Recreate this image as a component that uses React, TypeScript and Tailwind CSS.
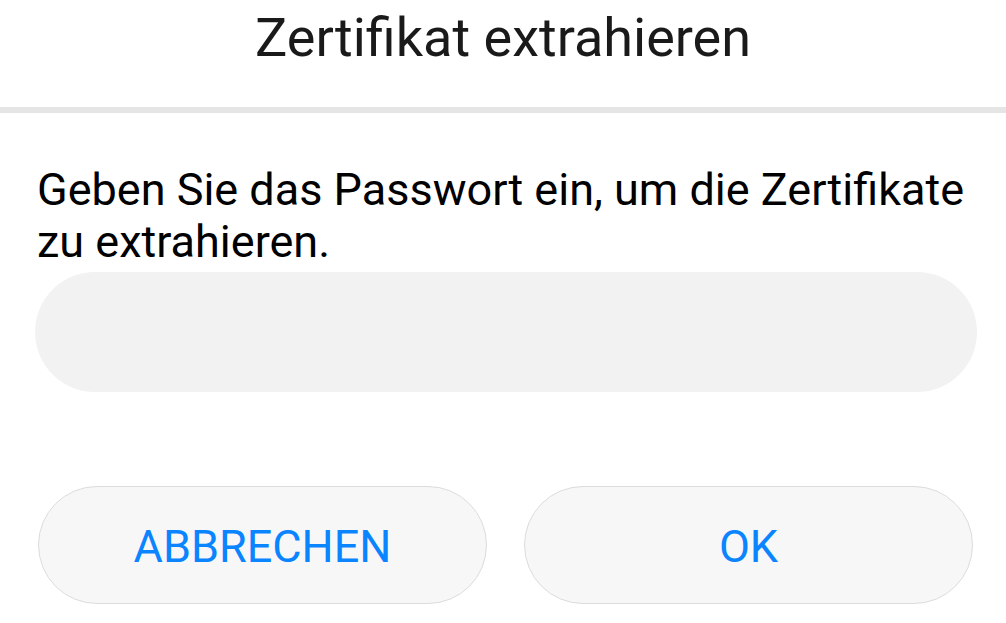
export default function App() {
  return (
    <div
      className="flex h-[623px] w-[1006px] flex-col overflow-hidden bg-white"
      style={{ fontFamily: "Roboto, 'Noto Sans', sans-serif" }}
    >
      <div className="flex h-[107px] items-start justify-center pt-[6px]">
        <h1 className="text-[54px] leading-[64px] text-[#1a1a1a]">Zertifikat extrahieren</h1>
      </div>
      <div className="h-[6px] bg-[#e5e5e5]" />

      <div className="pl-[35px] pr-[29px] pt-[51px]">
        <p className="pl-[2px] text-[45px] leading-[52px] text-black">
          Geben Sie das Passwort ein, um die Zertifikate zu extrahieren.
        </p>
        <div className="mt-[4px] h-[120px] rounded-full bg-[#f2f2f2]" />
      </div>

      <div className="mt-[94px] flex gap-[37px] pl-[38px] pr-[33px]">
        <button className="h-[118px] flex-1 rounded-full border border-[#dcdcdc] bg-[#f7f7f7] pt-[4px] text-[45px] text-[#0a84ff]">
          ABBRECHEN
        </button>
        <button className="h-[118px] flex-1 rounded-full border border-[#dcdcdc] bg-[#f7f7f7] pt-[4px] text-[45px] text-[#0a84ff]">
          OK
        </button>
      </div>
    </div>
  );
}
